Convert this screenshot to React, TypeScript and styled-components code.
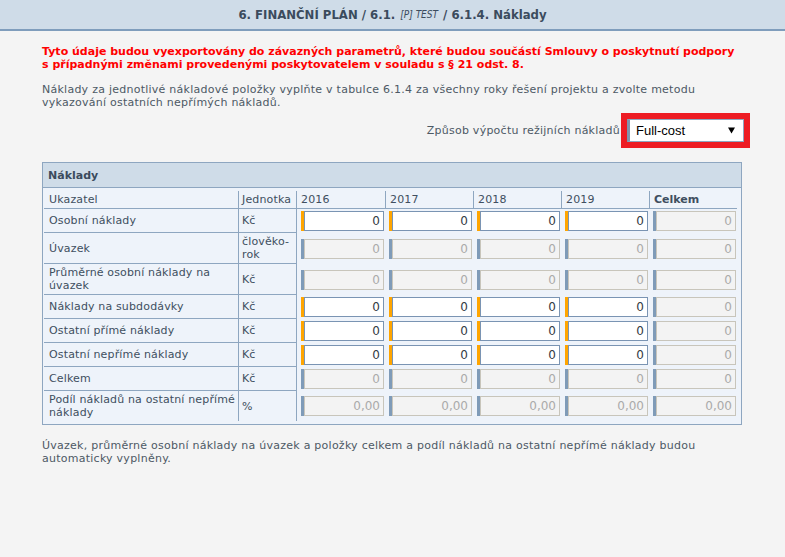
import React from "react";
import styled, { createGlobalStyle } from "styled-components";

const GlobalStyle = createGlobalStyle`
  html, body { margin: 0; padding: 0; background: #f4f4f4; }
  body {
    font-family: "DejaVu Sans", Verdana, sans-serif;
    font-size: 11px;
    letter-spacing: 0.25px;
    color: #4d5965;
  }
`;

const TitleBar = styled.header`
  height: 29px;
  background: #cfdce8;
  border-bottom: 2px solid #7f9dbc;
  display: flex;
  align-items: center;
  justify-content: center;
  font-family: "DejaVu Sans Condensed", "Liberation Sans Narrow", "Liberation Sans", sans-serif;
  font-weight: bold;
  font-size: 13px;
  letter-spacing: 0;
  color: #3b4b5d;
`;

const TitleTag = styled.span`
  font-style: italic;
  font-weight: normal;
  font-size: 10px;
  margin: 0 1px;
`;

const Main = styled.main`
  padding: 14px 35px 0 42px;
`;

const Warning = styled.p`
  margin: 0;
  color: #ff0000;
  font-weight: bold;
  letter-spacing: 0;
  line-height: 13px;
  white-space: nowrap;
`;

const Note = styled.p<{ $top: number }>`
  margin: ${(p) => p.$top}px 0 0;
  color: #4d5965;
  line-height: 13px;
  white-space: nowrap;
`;

const MethodRow = styled.div`
  display: flex;
  justify-content: flex-end;
  align-items: center;
  margin-top: 4px;
`;

const MethodLabel = styled.span`
  color: #4d5965;
  margin-right: 1px;
`;

const Highlight = styled.div`
  border: 6px solid #ed1c24;
  display: flex;
`;

const SelectBox = styled.div`
  width: 117px;
  height: 23px;
  box-sizing: border-box;
  background: #fff;
  border: 1px solid #8ea6c0;
  border-left: 3px solid #7f96ad;
  display: flex;
  align-items: center;
  justify-content: space-between;
  padding: 0 8px 0 6px;
  font-family: "Liberation Sans", Arial, sans-serif;
  font-size: 13px;
  letter-spacing: 0;
  color: #000;
`;

const Panel = styled.section`
  width: 700px;
  box-sizing: border-box;
  margin-top: 14px;
  border: 1px solid #8ea6c0;
  background: #eef3fa;
`;

const PanelHeader = styled.div`
  height: 24px;
  background: #cfdce8;
  border-bottom: 1px solid #8ea6c0;
  padding-left: 5px;
  display: flex;
  align-items: center;
  font-weight: bold;
  letter-spacing: 0;
  color: #3b4b5d;
`;

const PanelBody = styled.div`
  padding: 3px 4px 3px 1px;
`;

const Grid = styled.div`
  display: grid;
  grid-template-columns: 194px 59px repeat(5, 88px);
  letter-spacing: 0.15px;
  color: #404f60;
`;

const LINE = "#8ea6c0";

const HeadCell = styled.div<{ $left?: boolean; $right?: boolean; $bold?: boolean; $pad: number }>`
  height: 18px;
  box-sizing: border-box;
  padding: 2px 0 0 ${(p) => p.$pad}px;
  line-height: 13px;
  border-bottom: 1px solid ${LINE};
  border-left: ${(p) => (p.$left ? `1px solid ${LINE}` : "none")};
  border-right: ${(p) => (p.$right ? `1px solid ${LINE}` : "none")};
  font-weight: ${(p) => (p.$bold ? "bold" : "normal")};
  letter-spacing: ${(p) => (p.$bold ? "0" : "0.15px")};
`;

const LabelCell = styled.div<{ $last?: boolean }>`
  box-sizing: border-box;
  padding: 2px 0 2px 5px;
  line-height: 13px;
  display: flex;
  align-items: center;
  border-bottom: ${(p) => (p.$last ? "none" : `1px solid ${LINE}`)};
`;

const UnitCell = styled.div<{ $last?: boolean }>`
  box-sizing: border-box;
  padding: 2px 2px 2px 3px;
  line-height: 13px;
  display: flex;
  align-items: center;
  border-left: 1px solid ${LINE};
  border-right: 1px solid ${LINE};
  border-bottom: ${(p) => (p.$last ? "none" : `1px solid ${LINE}`)};
`;

const ValueCell = styled.div`
  padding: 2px 0 2px 4px;
  display: flex;
  align-items: center;
`;

const Field = styled.div<{ $editable: boolean }>`
  display: flex;
  border-left: 3px solid ${(p) => (p.$editable ? "#ffa500" : "#7f9bb8")};
`;

const Input = styled.input<{ $editable: boolean }>`
  width: 80px;
  height: 20px;
  box-sizing: border-box;
  margin: 0;
  border: 1px solid ${(p) => (p.$editable ? "#7a94b3" : "#c8c5bb")};
  background: ${(p) => (p.$editable ? "#ffffff" : "#f3f3f3")};
  color: ${(p) => (p.$editable ? "#333a44" : "#aaaaaa")};
  text-align: right;
  padding: 0 3px 0 2px;
  font-family: "DejaVu Sans", Verdana, sans-serif;
  font-size: 12px;
  letter-spacing: 0;
  outline: none;
`;

const Arrow = () => (
  <svg width="7" height="7" viewBox="0 0 7 7">
    <polygon points="0,0.5 7,0.5 3.5,6.5" fill="#000" />
  </svg>
);

type Row = { label: string; unit: string; editable: boolean; value: string };

const rows: Row[] = [
  { label: "Osobní náklady", unit: "Kč", editable: true, value: "0" },
  { label: "Úvazek", unit: "člověko-rok", editable: false, value: "0" },
  { label: "Průměrné osobní náklady na úvazek", unit: "Kč", editable: false, value: "0" },
  { label: "Náklady na subdodávky", unit: "Kč", editable: true, value: "0" },
  { label: "Ostatní přímé náklady", unit: "Kč", editable: true, value: "0" },
  { label: "Ostatní nepřímé náklady", unit: "Kč", editable: true, value: "0" },
  { label: "Celkem", unit: "Kč", editable: false, value: "0" },
  { label: "Podíl nákladů na ostatní nepřímé náklady", unit: "%", editable: false, value: "0,00" },
];

const years = ["2016", "2017", "2018", "2019"];

export default function App() {
  return (
    <>
      <GlobalStyle />
      <TitleBar>
        6. FINANČNÍ PLÁN / 6.1.&nbsp;<TitleTag>[P] TEST</TitleTag>&nbsp;/ 6.1.4. Náklady
      </TitleBar>
      <Main>
        <Warning>
          Tyto údaje budou vyexportovány do závazných parametrů, které budou součástí Smlouvy o poskytnutí podpory
          <br />s případnými změnami provedenými poskytovatelem v souladu s § 21 odst. 8.
        </Warning>
        <Note $top={12}>
          Náklady za jednotlivé nákladové položky vyplňte v tabulce 6.1.4 za všechny roky řešení projektu a zvolte metodu
          <br />vykazování ostatních nepřímých nákladů.
        </Note>
        <MethodRow>
          <MethodLabel>Způsob výpočtu režijních nákladů</MethodLabel>
          <Highlight>
            <SelectBox>
              <span>Full-cost</span>
              <Arrow />
            </SelectBox>
          </Highlight>
        </MethodRow>
        <Panel>
          <PanelHeader>Náklady</PanelHeader>
          <PanelBody>
            <Grid>
              <HeadCell $pad={5}>Ukazatel</HeadCell>
              <HeadCell $pad={3} $left $right>Jednotka</HeadCell>
              {years.map((y, i) => (
                <HeadCell key={y} $pad={4} $left={i > 0}>
                  {y}
                </HeadCell>
              ))}
              <HeadCell $pad={4} $left $bold>
                Celkem
              </HeadCell>
              {rows.map((r, ri) => {
                const last = ri === rows.length - 1;
                return (
                  <React.Fragment key={r.label}>
                    <LabelCell $last={last}>{r.label}</LabelCell>
                    <UnitCell $last={last}>{r.unit}</UnitCell>
                    {[0, 1, 2, 3, 4].map((c) => {
                      const ed = r.editable && c < 4;
                      return (
                        <ValueCell key={c}>
                          <Field $editable={ed}>
                            <Input $editable={ed} readOnly={!ed} defaultValue={r.value} />
                          </Field>
                        </ValueCell>
                      );
                    })}
                  </React.Fragment>
                );
              })}
            </Grid>
          </PanelBody>
        </Panel>
        <Note $top={14}>
          Úvazek, průměrné osobní náklady na úvazek a položky celkem a podíl nákladů na ostatní nepřímé náklady budou
          <br />automaticky vyplněny.
        </Note>
      </Main>
    </>
  );
}
